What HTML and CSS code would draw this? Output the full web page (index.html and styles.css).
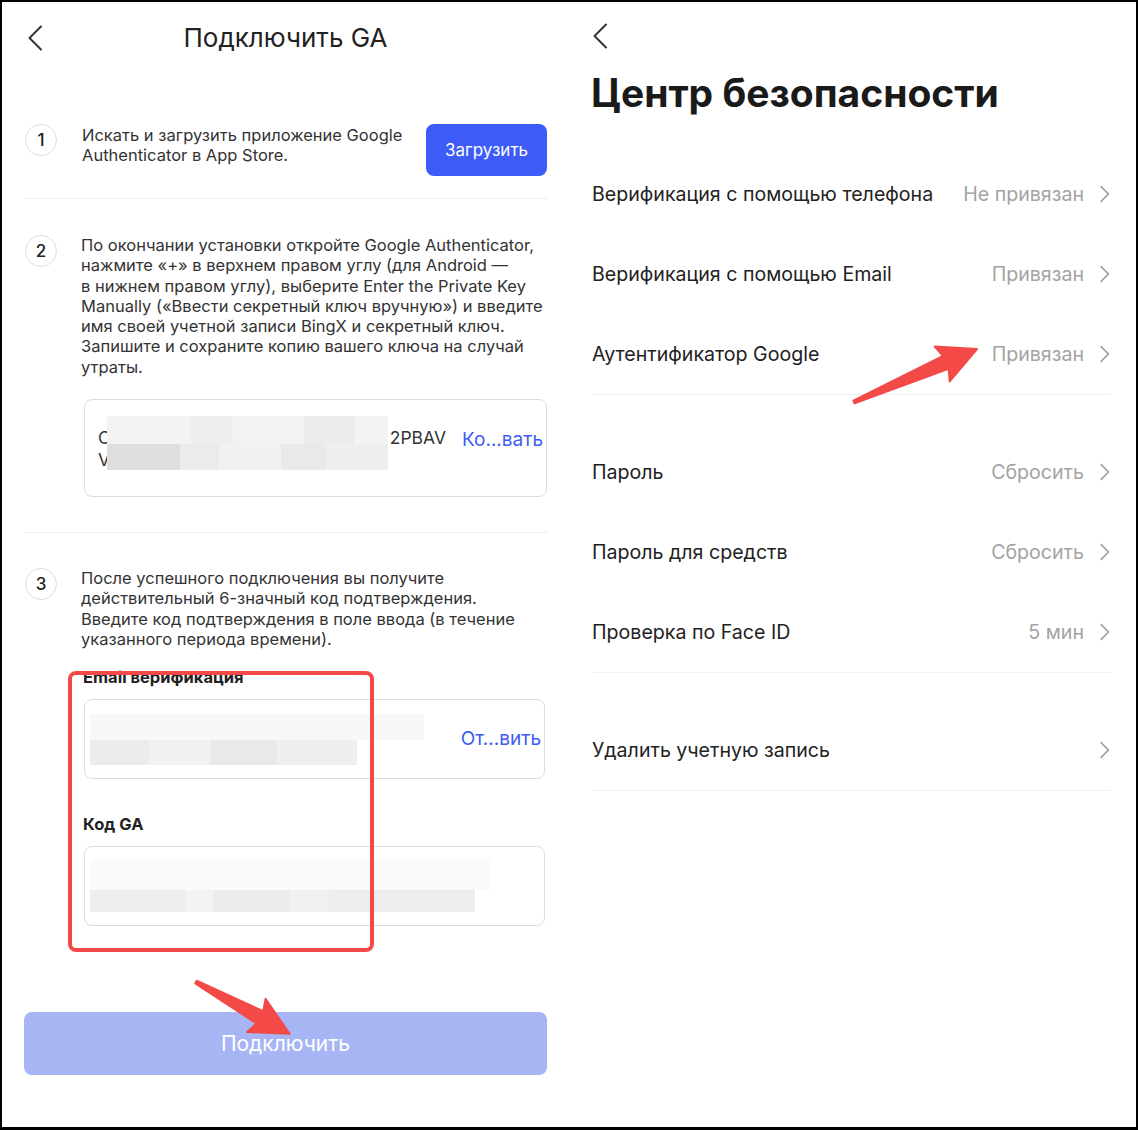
FILE: index.html
```html
<!DOCTYPE html>
<html lang="ru">
<head>
  <meta charset="UTF-8" />
  <meta name="viewport" content="width=device-width, initial-scale=1.0"/>
  <title>Подключить GA</title>
  <link rel="stylesheet" href="styles.css">
</head>
<body>

  <div class="frame">

    <!-- Bind Google Authenticator -->
    <section class="panel panel-bind">
      <header class="bind-header">
        <svg class="back" width="16" height="26" viewBox="0 0 16 26"><path d="M14 1.5 L2.5 13 L14 24.5" /></svg>
        <h1>Подключить GA</h1>
        <span></span>
      </header>

      <div class="step step-first">
        <span class="step-num">1</span>
        <p class="step-text">Искать и загрузить приложение Google<br>Authenticator в App Store.</p>
        <button class="btn-download" type="button">Загрузить</button>
      </div>

      <div class="step">
        <span class="step-num">2</span>
        <div class="step-body">
          <p class="step-text">По окончании установки откройте Google Authenticator,<br>нажмите «+» в верхнем правом углу (для Android —<br>в нижнем правом углу), выберите Enter the Private Key<br>Manually («Ввести секретный ключ вручную») и введите<br>имя своей учетной записи BingX и секретный ключ.<br>Запишите и сохраните копию вашего ключа на случай<br>утраты.</p>
          <div class="key-box">
            <div class="key-text">
              <div class="key-line"><span>C</span><span>2PBAV</span></div>
              <div class="key-line"><span>V</span></div>
              <div class="mosaic key-mosaic">
                <div class="mosaic-row key-row-a"></div>
                <div class="mosaic-row key-row-b"></div>
              </div>
            </div>
            <a class="link" href="#">Ко...вать</a>
          </div>
        </div>
      </div>

      <div class="step step-last">
        <span class="step-num">3</span>
        <div class="step-body">
          <p class="step-text">После успешного подключения вы получите<br>действительный 6-значный код подтверждения.<br>Введите код подтверждения в поле ввода (в течение<br>указанного периода времени).</p>

          <label class="field-label">Email верификация</label>
          <div class="field">
            <div class="mosaic">
              <div class="mosaic-row mail-row-a"></div>
              <div class="mosaic-row mail-row-b"></div>
            </div>
            <a class="link" href="#">От...вить</a>
          </div>

          <label class="field-label">Код GA</label>
          <div class="field">
            <div class="mosaic">
              <div class="mosaic-row ga-row-a"></div>
              <div class="mosaic-row ga-row-b"></div>
            </div>
          </div>
        </div>
      </div>

      <button class="btn-connect" type="button">Подключить</button>
    </section>

    <!-- Security center -->
    <section class="panel panel-security">
      <div class="sec-top">
        <svg class="back" width="16" height="26" viewBox="0 0 16 26"><path d="M14 1.5 L2.5 13 L14 24.5" /></svg>
      </div>
      <h2>Центр безопасности</h2>

      <div class="group">
        <div class="row"><span class="row-label">Верификация с помощью телефона</span><span class="row-value">Не привязан<svg class="chev" width="12" height="18" viewBox="0 0 12 18"><path d="M2 1.5 L9.5 9 L2 16.5" /></svg></span></div>
        <div class="row"><span class="row-label">Верификация с помощью Email</span><span class="row-value">Привязан<svg class="chev" width="12" height="18" viewBox="0 0 12 18"><path d="M2 1.5 L9.5 9 L2 16.5" /></svg></span></div>
        <div class="row"><span class="row-label">Аутентификатор Google</span><span class="row-value">Привязан<svg class="chev" width="12" height="18" viewBox="0 0 12 18"><path d="M2 1.5 L9.5 9 L2 16.5" /></svg></span></div>
      </div>

      <div class="group">
        <div class="row"><span class="row-label">Пароль</span><span class="row-value">Сбросить<svg class="chev" width="12" height="18" viewBox="0 0 12 18"><path d="M2 1.5 L9.5 9 L2 16.5" /></svg></span></div>
        <div class="row"><span class="row-label">Пароль для средств</span><span class="row-value">Сбросить<svg class="chev" width="12" height="18" viewBox="0 0 12 18"><path d="M2 1.5 L9.5 9 L2 16.5" /></svg></span></div>
        <div class="row"><span class="row-label">Проверка по Face ID</span><span class="row-value">5 мин<svg class="chev" width="12" height="18" viewBox="0 0 12 18"><path d="M2 1.5 L9.5 9 L2 16.5" /></svg></span></div>
      </div>

      <div class="group group-last">
        <div class="row"><span class="row-label">Удалить учетную запись</span><span class="row-value"><svg class="chev" width="12" height="18" viewBox="0 0 12 18"><path d="M2 1.5 L9.5 9 L2 16.5" /></svg></span></div>
      </div>
    </section>

    <!-- red markup layer -->
    <svg class="marks" width="1134" height="1125" viewBox="0 0 1134 1125">
      <rect x="68" y="671" width="302" height="277" rx="6" class="mark-box" />
      <polygon class="mark-arrow" transform="translate(194 980) rotate(29)"
               points="0,-1.5 73,-7 69,-19 107,0 69,19 73,7 0,1.5" />
      <polygon class="mark-arrow" transform="translate(852 400) rotate(-23.3)"
               points="0,-1.5 100,-7 96,-19 134,0 96,19 100,7 0,1.5" />
    </svg>
  </div>

</body>
</html>
```

FILE: styles.css
```css
/* Base & Layout */
body {
  margin: 0;
  background: #fff;
}
.frame {
  position: relative;
  width: 1138px;
  height: 1130px;
  box-sizing: border-box;
  border: 2px solid #000;
  border-bottom-width: 3px;
  display: grid;
  grid-template-columns: minmax(0, 1fr) minmax(0, 1fr);
  background: #fff;
  font-family: Inter, "Noto Sans", sans-serif;
  color: #222;
}
.panel {
  display: flex;
  flex-direction: column;
  min-width: 0;
}
.back path,
.chev path {
  fill: none;
  stroke-linecap: round;
  stroke-linejoin: round;
}
.back path {
  stroke: #333;
  stroke-width: 2;
}
.chev path {
  stroke: #9a9a9a;
  stroke-width: 1.6;
}

/* Bind panel */
.panel-bind {
  padding: 0 22px;
}
.bind-header {
  height: 72px;
  display: grid;
  grid-template-columns: 40px 1fr 40px;
  align-items: center;
}
.bind-header .back {
  margin-left: 3px;
}
.bind-header h1 {
  margin: 0;
  font-size: 26px;
  line-height: 32px;
  font-weight: 400;
  text-align: center;
  color: #222;
}

/* Steps */
.step {
  display: flex;
  align-items: flex-start;
  border-bottom: 1px solid #eee;
  padding: 36px 0 35px;
}
.step-first {
  padding: 50px 0 22px;
}
.step-last {
  border-bottom: none;
  padding: 35px 0 0;
}
.step-num {
  flex: none;
  width: 30px;
  height: 30px;
  margin-left: 1px;
  border: 1px solid #ddd;
  border-radius: 50%;
  display: flex;
  align-items: center;
  justify-content: center;
  font-size: 17px;
  font-weight: 500;
  color: #222;
}
.step-text {
  margin: 0;
  font-size: 16.5px;
  line-height: 20.3px;
  white-space: nowrap;
  color: #333;
}
.step-first .step-text {
  margin: 1px 0 0 25px;
  flex: 1;
}
.step-body {
  flex: 1;
  min-width: 0;
  margin-left: 24px;
}
.btn-download {
  flex: none;
  width: 121px;
  height: 52px;
  border: none;
  border-radius: 8px;
  background: #3d5bf6;
  color: #fff;
  font-family: inherit;
  font-size: 17px;
}

/* Secret key */
.key-box {
  margin: 22px 0 0 3px;
  height: 98px;
  box-sizing: border-box;
  border: 1px solid #ddd;
  border-radius: 8px;
  display: flex;
  align-items: flex-start;
  padding: 27px 3px 0 13px;
}
.key-text {
  position: relative;
  width: 348px;
  font-size: 17.5px;
  line-height: 22px;
  color: #333;
}
.key-line {
  display: flex;
  justify-content: space-between;
}
.key-mosaic {
  position: absolute;
  left: 9px;
  top: -11px;
  width: 281px;
}
.link {
  margin-left: auto;
  font-size: 19px;
  line-height: 26px;
  color: #3d5bf6;
  text-decoration: none;
}

/* Blurred values */
.mosaic-row {
  background: #f2f2f2;
}
.key-row-a {
  height: 28px;
  background: linear-gradient(90deg, #f3f3f3 0 30%, #eeeeee 30% 45%, #f2f2f2 45% 70%, #ececec 70% 88%, #f3f3f3 88%);
}
.key-row-b {
  height: 26px;
  background: linear-gradient(90deg, #dedede 0 26%, #ebebeb 26% 40%, #f1f1f1 40% 62%, #e9e9e9 62% 78%, #eeeeee 78%);
}
.mail-row-a {
  width: 334px;
  height: 26px;
  background: #f8f8f8;
}
.mail-row-b {
  width: 267px;
  height: 25px;
  background: linear-gradient(90deg, #ececec 0 22%, #f1f1f1 22% 45%, #e9e9e9 45% 70%, #efefef 70%);
}
.ga-row-a {
  width: 400px;
  height: 30px;
  background: #fafafa;
}
.ga-row-b {
  width: 385px;
  height: 22px;
  background: linear-gradient(90deg, #eeeeee 0 25%, #f3f3f3 25% 32%, #ececec 32% 52%, #f1f1f1 52% 62%, #ededed 62%);
}

/* Fields */
.field-label {
  display: block;
  margin: 18px 0 0 2px;
  font-size: 16.5px;
  font-weight: 700;
  line-height: 20px;
  color: #222;
}
.field-label + .field {
  margin-top: 12px;
}
.field ~ .field-label {
  margin-top: 35px;
}
.field {
  margin-left: 3px;
  margin-right: 2px;
  height: 80px;
  box-sizing: border-box;
  border: 1px solid #ddd;
  border-radius: 8px;
  display: flex;
  align-items: center;
  padding: 0 3px 0 5px;
}
.btn-connect {
  margin-top: 86px;
  height: 63px;
  border: none;
  border-radius: 8px;
  background: #a7b5f4;
  color: #fff;
  font-family: inherit;
  font-size: 21px;
}

/* Security panel */
.panel-security {
  padding: 0 25px 0 23px;
}
.sec-top {
  height: 68px;
  display: flex;
  align-items: center;
}
.panel-security h2 {
  margin: 0 0 38px -1px;
  font-size: 39px;
  line-height: 46px;
  font-weight: 700;
  color: #1a1a1a;
}
.group {
  border-bottom: 1px solid #f0f0f0;
}
.group + .group {
  padding-top: 37px;
}
.group-last {
  padding-top: 35px;
}
.row {
  height: 80px;
  display: flex;
  align-items: center;
  justify-content: space-between;
}
.row-label {
  font-size: 19.6px;
  color: #222;
}
.row-value {
  display: flex;
  align-items: center;
  font-size: 19.6px;
  color: #a3a3a3;
}
.chev {
  margin-left: 15px;
}

/* Red markup */
.marks {
  position: absolute;
  left: 0;
  top: 0;
  pointer-events: none;
}
.mark-box {
  fill: none;
  stroke: #f34a47;
  stroke-width: 4;
}
.mark-arrow {
  fill: #f34a47;
  stroke: #f34a47;
  stroke-width: 2;
  stroke-linejoin: round;
}
```
